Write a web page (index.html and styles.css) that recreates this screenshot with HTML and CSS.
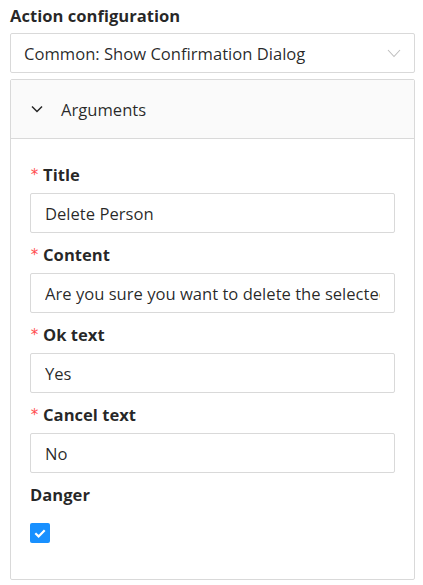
FILE: index.html
```html
<!DOCTYPE html>
<html>
<head>
<meta charset="utf-8">
<link rel="stylesheet" href="styles.css">
</head>
<body>
<div class="section-title">Action configuration</div>
<div class="select">
  <span class="select-value">Common: Show Confirmation Dialog</span>
  <svg class="select-arrow" width="14" height="10" viewBox="0 0 14 10"><path d="M1 2 L7 8.5 L13 2" fill="none" stroke="#bfbfbf" stroke-width="1.1"/></svg>
</div>
<div class="panel">
  <div class="panel-header">
    <svg class="panel-arrow" width="12" height="8" viewBox="0 0 12 8"><path d="M1 1.5 L6 6.5 L11 1.5" fill="none" stroke="#262626" stroke-width="1.5"/></svg>
    <span>Arguments</span>
  </div>
  <div class="panel-body">
    <div class="item">
      <label class="label"><span class="req">*</span>Title</label>
      <input class="input" type="text" value="Delete Person">
    </div>
    <div class="item">
      <label class="label"><span class="req">*</span>Content</label>
      <input class="input" type="text" value="Are you sure you want to delete the selected person?">
    </div>
    <div class="item">
      <label class="label"><span class="req">*</span>Ok text</label>
      <input class="input" type="text" value="Yes">
    </div>
    <div class="item">
      <label class="label"><span class="req">*</span>Cancel text</label>
      <input class="input" type="text" value="No">
    </div>
    <div class="item">
      <label class="label">Danger</label>
      <div class="check-row">
        <span class="checkbox"><svg width="20" height="20" viewBox="0 0 20 20"><path d="M5.3 10.2 L8.6 13.4 L14.7 7.2" fill="none" stroke="#fff" stroke-width="2.2"/></svg></span>
      </div>
    </div>
  </div>
</div>
</body>
</html>
```
FILE: styles.css
```css
* { box-sizing: border-box; }
body {
  margin: 0;
  padding: 4px 8px 0 10px;
  font-family: "Open Sans", "Noto Sans", sans-serif;
  font-size: 16.6px;
  color: rgba(0,0,0,0.85);
  background: #fff;
}
.section-title {
  font-weight: 700;
  line-height: 24px;
  margin-bottom: 5px;
}
.select {
  height: 40px;
  border: 1px solid #d9d9d9;
  border-radius: 2px;
  display: flex;
  align-items: center;
  padding: 0 13px 0 13px;
}
.select-value { flex: 1; white-space: nowrap; }
.select-arrow { flex: none; }
.panel {
  margin-top: 6px;
  border: 1px solid #d9d9d9;
  border-radius: 2px;
}
.panel-header {
  height: 59px;
  background: #fafafa;
  border-bottom: 1px solid #d9d9d9;
  display: flex;
  align-items: center;
  padding-left: 20px;
  gap: 18px;
}
.panel-arrow { flex: none; }
.panel-body {
  padding: 24px 19px 16px 19px;
}
.item { margin-bottom: 10px; }
.label {
  font-weight: 700;
  line-height: 24px;
  margin-bottom: 6px;
  display: flex;
  align-items: center;
}
.req {
  color: #ff4d4f;
  font-weight: 400;
  margin-right: 4px;
  font-family: "DejaVu Sans Mono", monospace;
  font-size: 15px;
}
.input {
  display: block;
  width: 100%;
  height: 40px;
  margin: 0;
  border: 1px solid #d9d9d9;
  border-radius: 2px;
  padding: 0 14px;
  font: inherit;
  color: rgba(0,0,0,0.85);
  background: #fff;
  outline: none;
}
.check-row {
  height: 40px;
  display: flex;
  align-items: center;
}
.checkbox {
  width: 20px;
  height: 20px;
  border-radius: 2px;
  background: #1890ff;
  display: block;
}
.checkbox svg { display: block; }
```
